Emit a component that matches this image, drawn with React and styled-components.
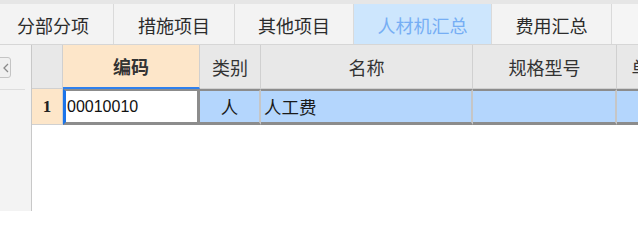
import React from "react";
import styled, { createGlobalStyle } from "styled-components";

const GlobalStyle = createGlobalStyle`
  html, body {
    margin: 0;
    padding: 0;
    background: #ffffff;
  }
  body {
    font-family: "Noto Sans CJK SC", "Noto Sans", sans-serif;
    color: #333333;
  }
`;

const Page = styled.div`
  width: 638px;
  height: 211px;
  overflow: hidden;
  display: flex;
  flex-direction: column;
  background: #f3f3f3;
`;

const TopStrip = styled.div`
  height: 4px;
  background: #e6e6e6;
`;

const TabBar = styled.div`
  display: flex;
  height: 40px;
  margin-left: -7px;
  background: #f5f5f5;
  border-bottom: 1px solid #d6d6d6;
`;

const Tab = styled.div`
  width: ${({ $w }) => $w}px;
  flex-shrink: 0;
  box-sizing: border-box;
  padding-top: 3px;
  text-align: center;
  border-right: 1px solid #dadada;
  font-size: 18px;
  line-height: 37px;
  white-space: nowrap;
  color: ${({ $active }) => ($active ? "#76aef4" : "#2b2b2b")};
  background: ${({ $active }) => ($active ? "#cde6fd" : "#f3f3f3")};
`;

const Body = styled.div`
  flex: 1;
  display: flex;
  min-height: 0;
`;

const SidePanel = styled.div`
  width: 31px;
  flex-shrink: 0;
  display: flex;
  flex-direction: column;
  background: #f3f3f3;
`;

const CollapseButton = styled.div`
  width: 11px;
  height: 19px;
  margin: 12px 0 0 -3px;
  border: 1px solid #c4c4c4;
  border-radius: 3px;
  background: #f0f0f0;
  display: flex;
  align-items: center;
  justify-content: flex-end;
  padding-right: 1px;
`;

const SideDivider = styled.div`
  width: 25px;
  height: 1px;
  margin-top: 11px;
  background: #dddddd;
`;

const Grid = styled.div`
  flex: 1;
  min-width: 0;
  overflow: hidden;
  display: grid;
  grid-template-columns: 31px 137px 61px 212px 144px 66px;
  grid-template-rows: 44px 36px;
  align-content: start;
  background: #ffffff;
  border-left: 1px solid #c8c8c8;
`;

const HeadCell = styled.div`
  display: flex;
  align-items: center;
  justify-content: center;
  font-size: 18px;
  white-space: nowrap;
  overflow: hidden;
  color: #333333;
  font-weight: ${({ $sel }) => ($sel ? 700 : 400)};
  background: ${({ $sel }) => ($sel ? "#fde6c9" : "#e8e8e8")};
  border-right: 1px solid #d0d0d0;
  border-bottom: ${({ $sel }) => ($sel ? "2px solid #2f80ed" : "1px solid #d0d0d0")};
`;

const RowNum = styled.div`
  display: flex;
  align-items: center;
  justify-content: center;
  font-family: "Liberation Serif", serif;
  font-weight: 700;
  font-size: 17px;
  color: #222222;
  background: #fde6c9;
  border-right: 1px solid #d0d0d0;
  border-bottom: 1px solid #d0d0d0;
`;

const EditCell = styled.div`
  display: flex;
  align-items: center;
  padding-left: 1px;
  font-family: "Liberation Sans", Arial, sans-serif;
  font-size: 16px;
  color: #111111;
  background: #ffffff;
  border: 3px solid #8c8c8c;
  border-left: 3px solid #1c74e9;
  border-top-width: 2px;
`;

const DataCell = styled.div`
  display: flex;
  align-items: center;
  justify-content: ${({ $center }) => ($center ? "center" : "flex-start")};
  padding-left: ${({ $center }) => ($center ? "0" : "3px")};
  font-size: 17.5px;
  color: #1a1a1a;
  white-space: nowrap;
  background: #b4d6fd;
  border-top: 2px solid #8c8c8c;
  border-bottom: 3px solid #8c8c8c;
  border-right: 2px solid #c6c6c6;
`;

const tabs = [
  { label: "分部分项", w: 121 },
  { label: "措施项目", w: 121 },
  { label: "其他项目", w: 119 },
  { label: "人材机汇总", w: 138, active: true },
  { label: "费用汇总", w: 120 },
];

const columns = [
  { label: "编码", sel: true },
  { label: "类别" },
  { label: "名称" },
  { label: "规格型号" },
  { label: "单价" },
];

export default function App() {
  return (
    <>
      <GlobalStyle />
      <Page>
        <TopStrip />
        <TabBar>
          {tabs.map((t) => (
            <Tab key={t.label} $w={t.w} $active={t.active}>
              {t.label}
            </Tab>
          ))}
        </TabBar>
        <Body>
          <SidePanel>
            <CollapseButton>
              <svg width="6" height="10" viewBox="0 0 6 10">
                <polyline points="5,1 1,5 5,9" fill="none" stroke="#8a8a8a" strokeWidth="1.3" />
              </svg>
            </CollapseButton>
            <SideDivider />
          </SidePanel>
          <Grid>
            <HeadCell />
            {columns.map((c) => (
              <HeadCell key={c.label} $sel={c.sel}>
                {c.label}
              </HeadCell>
            ))}
            <RowNum>1</RowNum>
            <EditCell>00010010</EditCell>
            <DataCell $center>人</DataCell>
            <DataCell>人工费</DataCell>
            <DataCell />
            <DataCell />
          </Grid>
        </Body>
      </Page>
    </>
  );
}
